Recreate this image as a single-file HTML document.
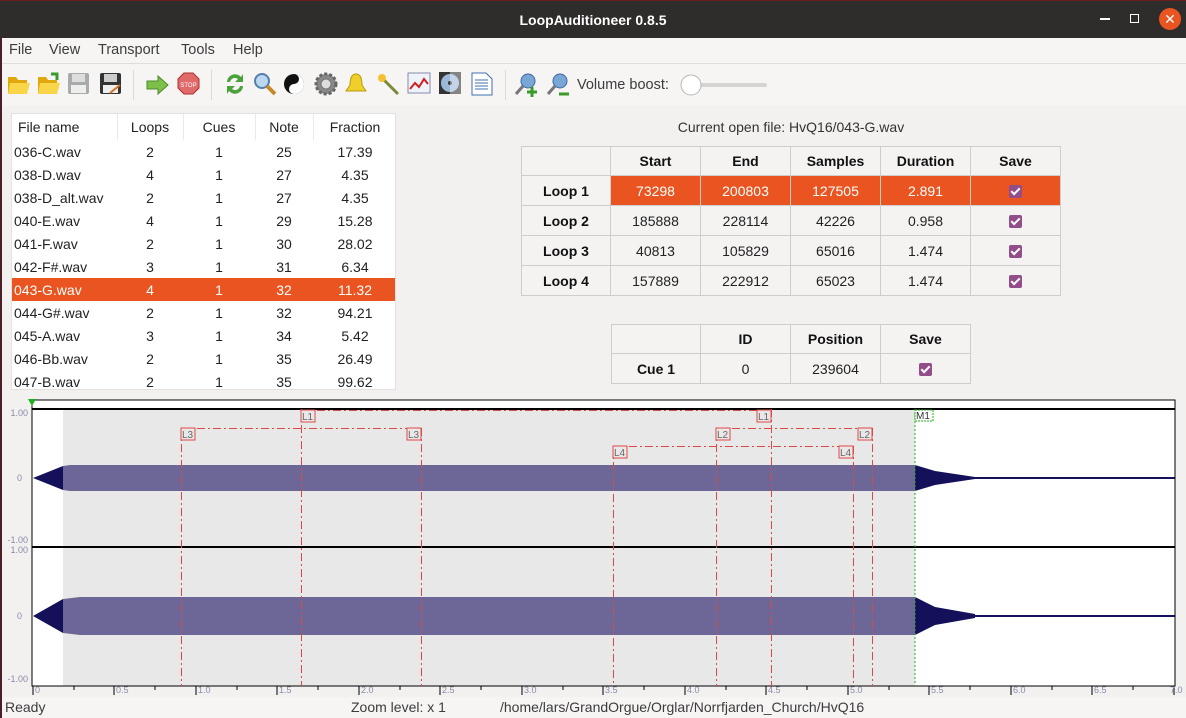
<!DOCTYPE html>
<html><head><meta charset="utf-8"><style>
*{margin:0;padding:0;box-sizing:border-box}
body{width:1186px;height:718px;overflow:hidden;background:#f2f1f0;font-family:"Liberation Sans","DejaVu Sans",sans-serif;font-size:14px;color:#3c3c3c;position:relative}
.abs{position:absolute}
#title{left:0;top:0;width:1186px;height:38px;background:#2f2d2b;color:#fff;font-weight:bold;font-size:14px;text-align:center;line-height:38px;border-top:1px solid #6b1c1c}
#menu{left:0;top:38px;width:1186px;height:26px;background:#f6f5f4;border-bottom:1px solid #e0dedc}
#menu span{position:absolute;top:4px;font-size:14.5px;color:#3c3c3c}
#tb{left:0;top:64px;width:1186px;height:42px;background:#f6f5f4}
.sep{position:absolute;top:70px;width:1px;height:30px;background:#dcdad7}
table{border-collapse:collapse}
#files{left:11px;top:113px;width:385px;height:277px;background:#fff;border:1px solid #e4e2e0;overflow:hidden}
#files table{width:385px;font-size:14px;color:#222;table-layout:fixed}
#files td{height:23px;text-align:center;padding:0;white-space:nowrap}
#files td:first-child{text-align:left;padding-left:2px}
#files tr.h td{height:26px;border-right:1px solid #eceae8}
#files tr.h td:first-child{padding-left:6px}
#files tr.sel td{background:#e95420;color:#fff}
.grid td{border:1px solid #cfcdcb;text-align:center;font-size:14px;color:#222;background:#f4f3f2;padding:0}
.grid tr:first-child td,.grid td:first-child{font-weight:bold;color:#111}
.grid td.o{background:#e95420;color:#fff}
.cb{display:inline-block;width:13px;height:13px;background:#924d8b;border-radius:2px;position:relative;vertical-align:middle}
.cb:after{content:"";position:absolute;left:4px;top:1px;width:3px;height:7px;border:solid #fff;border-width:0 2px 2px 0;transform:rotate(45deg)}
#status{left:0;top:697px;width:1186px;height:21px;background:#f6f5f4;font-size:14px}
#status span{position:absolute;top:2px}
</style></head><body>
<div id="title" class="abs">LoopAuditioneer 0.8.5</div>
<div class="abs" style="left:1100px;top:18px;width:10px;height:1.5px;background:#fff"></div>
<div class="abs" style="left:1130px;top:14px;width:9px;height:9px;border:1.5px solid #fff"></div>
<div class="abs" style="left:1159px;top:8px;width:22px;height:22px;border-radius:50%;background:#e95420;color:#fff;text-align:center;line-height:22px;font-size:14px">✕</div>
<div id="menu" class="abs"><span style="left:9px">File</span><span style="left:49px">View</span><span style="left:98px">Transport</span><span style="left:181px">Tools</span><span style="left:233px">Help</span></div>
<div id="tb" class="abs">
<svg width="780" height="42" style="position:absolute;left:0;top:0">
<g transform="translate(7,8)"><path d="M1 5h8l2 3h9v14H1z" fill="#e0a80c"/><path d="M3 11h20l-3 11H1z" fill="#f9d54a"/></g>
<g transform="translate(37,8)"><path d="M1 5h8l2 3h9v14H1z" fill="#e0a80c"/><path d="M3 11h20l-3 11H1z" fill="#f9d54a"/><path d="M14 2l6 0 0 6" stroke="#3a9a2a" stroke-width="3" fill="none"/></g>
<g transform="translate(68,9)"><rect width="21" height="21" rx="2" fill="#aaa"/><rect x="4" y="1" width="13" height="8" fill="#ddd"/><rect x="3" y="12" width="15" height="8" fill="#eee"/></g>
<g transform="translate(100,9)"><rect width="21" height="21" rx="2" fill="#333"/><rect x="4" y="1" width="13" height="8" fill="#ccc"/><rect x="3" y="12" width="15" height="8" fill="#eee"/><path d="M10 20l10-8" stroke="#d07020" stroke-width="2"/></g>
<g transform="translate(146,10)"><path d="M1 7h11V2l10 9-10 9v-5H1z" fill="#7cc04a" stroke="#4d8a2a"/></g>
<g transform="translate(177,8)"><polygon points="7,1 16,1 22,7 22,16 16,22 7,22 1,16 1,7" fill="#e06a6a" stroke="#b03030"/><text x="11.5" y="15" font-size="6" fill="#fff" text-anchor="middle" font-family="Liberation Sans">STOP</text></g>
<g transform="translate(223,8)"><path d="M4 10a8 8 0 0 1 14-5l2-3v8h-8l3-3a5 5 0 0 0-8 3z" fill="#4ca23a"/><path d="M20 14a8 8 0 0 1-14 5l-2 3v-8h8l-3 3a5 5 0 0 0 8-3z" fill="#4ca23a"/></g>
<g transform="translate(253,8)"><circle cx="9" cy="9" r="7" fill="#bcd7f0" stroke="#5580aa" stroke-width="2"/><path d="M14 14l8 8" stroke="#c58a2a" stroke-width="4"/></g>
<g transform="translate(283,8)"><circle cx="11" cy="12" r="10" fill="#111"/><path d="M11 2a5 5 0 0 1 0 10a5 5 0 0 0 0 10a10 10 0 0 0 0-20z" fill="#fff"/><circle cx="11" cy="7" r="1.5" fill="#111"/><circle cx="11" cy="17" r="1.5" fill="#fff"/></g>
<g transform="translate(314,8)"><circle cx="12" cy="12" r="10" fill="#888" stroke="#666" stroke-width="3" stroke-dasharray="3 2"/><circle cx="12" cy="12" r="5" fill="#ddd" stroke="#777"/></g>
<g transform="translate(345,8)"><path d="M11 2c5 0 6 6 6 11l4 6H1l4-6c0-5 1-11 6-11z" fill="#f1cf2a" stroke="#b89a10"/></g>
<g transform="translate(376,8)"><path d="M8 8l14 14" stroke="#7a8a3a" stroke-width="3"/><circle cx="6" cy="6" r="4" fill="#f6c030"/></g>
<g transform="translate(408,9)"><rect width="22" height="20" fill="#eef3fa" stroke="#88a"/><path d="M2 16l5-6 4 4 5-8 4 5" stroke="#d02020" stroke-width="2" fill="none"/></g>
<g transform="translate(439,8)"><rect width="22" height="22" fill="#333"/><circle cx="11" cy="11" r="9" fill="#9cb8d8"/><circle cx="11" cy="11" r="2" fill="#333"/><rect x="11" width="11" height="22" fill="#fff" opacity=".4"/></g>
<g transform="translate(471,8)"><path d="M1 1h14l6 6v16H1z" fill="#fff" stroke="#4070b0"/><path d="M4 8h13M4 11h13M4 14h13M4 17h13" stroke="#4070b0"/></g>
<g transform="translate(514,8)"><circle cx="14" cy="9" r="7" fill="#7aa6d6" stroke="#3a6aa0"/><path d="M9 14l-7 8" stroke="#777" stroke-width="3"/><path d="M13 20h10M18 15v10" stroke="#3a9a2a" stroke-width="3"/></g>
<g transform="translate(546,8)"><circle cx="14" cy="9" r="7" fill="#7aa6d6" stroke="#3a6aa0"/><path d="M9 14l-7 8" stroke="#777" stroke-width="3"/><path d="M13 22h10" stroke="#3a9a2a" stroke-width="3"/></g>
<text x="577" y="25" font-size="14.5" fill="#3c3c3c" font-family="Liberation Sans">Volume boost:</text>
<rect x="700" y="19" width="67" height="4" rx="2" fill="#d6d4d2"/>
<circle cx="691" cy="21" r="10" fill="#fff" stroke="#b8b6b4"/>
</svg>
</div>
<div class="sep" style="left:133px"></div><div class="sep" style="left:211px"></div><div class="sep" style="left:505px"></div>

<div id="files" class="abs"><table>
<colgroup><col style="width:105px"><col style="width:66px"><col style="width:72px"><col style="width:58px"><col style="width:84px"></colgroup>
<tr class="h"><td>File name</td><td>Loops</td><td>Cues</td><td>Note</td><td>Fraction</td></tr>
<tr><td>036-C.wav</td><td>2</td><td>1</td><td>25</td><td>17.39</td></tr>
<tr><td>038-D.wav</td><td>4</td><td>1</td><td>27</td><td>4.35</td></tr>
<tr><td>038-D_alt.wav</td><td>2</td><td>1</td><td>27</td><td>4.35</td></tr>
<tr><td>040-E.wav</td><td>4</td><td>1</td><td>29</td><td>15.28</td></tr>
<tr><td>041-F.wav</td><td>2</td><td>1</td><td>30</td><td>28.02</td></tr>
<tr><td>042-F#.wav</td><td>3</td><td>1</td><td>31</td><td>6.34</td></tr>
<tr class="sel"><td>043-G.wav</td><td>4</td><td>1</td><td>32</td><td>11.32</td></tr>
<tr><td>044-G#.wav</td><td>2</td><td>1</td><td>32</td><td>94.21</td></tr>
<tr><td>045-A.wav</td><td>3</td><td>1</td><td>34</td><td>5.42</td></tr>
<tr><td>046-Bb.wav</td><td>2</td><td>1</td><td>35</td><td>26.49</td></tr>
<tr><td>047-B.wav</td><td>2</td><td>1</td><td>35</td><td>99.62</td></tr>
</table></div>

<div class="abs" style="left:521px;top:119px;width:540px;text-align:center;font-size:14px;color:#333">Current open file: HvQ16/043-G.wav</div>
<table class="grid abs" style="left:521px;top:146px;width:540px">
<tr style="height:29px"><td style="width:89px"></td><td style="width:90px">Start</td><td style="width:90px">End</td><td style="width:90px">Samples</td><td style="width:90px">Duration</td><td>Save</td></tr>
<tr style="height:30px"><td>Loop 1</td><td class="o">73298</td><td class="o">200803</td><td class="o">127505</td><td class="o">2.891</td><td class="o"><span class="cb"></span></td></tr>
<tr style="height:30px"><td>Loop 2</td><td>185888</td><td>228114</td><td>42226</td><td>0.958</td><td><span class="cb"></span></td></tr>
<tr style="height:30px"><td>Loop 3</td><td>40813</td><td>105829</td><td>65016</td><td>1.474</td><td><span class="cb"></span></td></tr>
<tr style="height:30px"><td>Loop 4</td><td>157889</td><td>222912</td><td>65023</td><td>1.474</td><td><span class="cb"></span></td></tr>
</table>
<table class="grid abs" style="left:611px;top:324px;width:360px">
<tr style="height:29px"><td style="width:89px"></td><td style="width:90px">ID</td><td style="width:90px">Position</td><td>Save</td></tr>
<tr style="height:30px"><td>Cue 1</td><td>0</td><td>239604</td><td><span class="cb"></span></td></tr>
</table>

<svg class="abs" style="left:0;top:395px" width="1186" height="302" font-family="Liberation Sans">
<rect x="32" y="5" width="1143" height="9" fill="#fff" stroke="#000"/>
<polygon points="28,4 36,4 32,11" fill="#1bb01b"/>
<rect x="32" y="14" width="1143" height="277" fill="#fff"/>
<rect x="63" y="14" width="852" height="277" fill="#e8e8e8"/>
<polygon points="33,83 63,71 63,95" fill="#14105a"/>
<polygon points="63,71 70,70 915,70 915,96 70,96 63,95" fill="#6d6797"/>
<polygon points="915,70 935,76 975,82 975,84 935,90 915,96" fill="#14105a"/>
<rect x="975" y="82" width="200" height="2" fill="#14105a"/>
<polygon points="33,221 63,204 63,238" fill="#14105a"/>
<polygon points="63,204 80,202 915,202 915,240 80,240 63,238" fill="#6d6797"/>
<polygon points="915,202 935,212 975,219 975,223 935,230 915,240" fill="#14105a"/>
<rect x="975" y="220" width="200" height="2" fill="#14105a"/>
<line x1="32" y1="14" x2="1175" y2="14" stroke="#000" stroke-width="2"/>
<line x1="32" y1="152" x2="1175" y2="152" stroke="#000" stroke-width="2"/>
<rect x="32" y="14" width="1143" height="277" fill="none" stroke="#000"/>
<g stroke="#e04848" stroke-width="1" stroke-dasharray="8 3 2 3" fill="none">
<path d="M181.5,33V291M301.5,14V291M421.5,33V291M613.5,51V291M716.5,33V291M771.5,14V291M853.5,51V291M872.5,33V291"/>
<path d="M301,15.5H771M181,33.5H421M716,33.5H872M613,51.5H853"/>
</g>
<g font-size="10" fill="#666">
<rect x="301" y="15" width="14" height="12" fill="#e8e8e8" stroke="#e04848"/><text x="302" y="25">L1</text>
<rect x="757" y="15" width="14" height="12" fill="#e8e8e8" stroke="#e04848"/><text x="758" y="25">L1</text>
<rect x="181" y="33" width="14" height="12" fill="#e8e8e8" stroke="#e04848"/><text x="182" y="43">L3</text>
<rect x="407" y="33" width="14" height="12" fill="#e8e8e8" stroke="#e04848"/><text x="408" y="43">L3</text>
<rect x="716" y="33" width="14" height="12" fill="#e8e8e8" stroke="#e04848"/><text x="717" y="43">L2</text>
<rect x="858" y="33" width="14" height="12" fill="#e8e8e8" stroke="#e04848"/><text x="859" y="43">L2</text>
<rect x="613" y="51" width="14" height="12" fill="#e8e8e8" stroke="#e04848"/><text x="614" y="61">L4</text>
<rect x="839" y="51" width="14" height="12" fill="#e8e8e8" stroke="#e04848"/><text x="840" y="61">L4</text>
</g>
<line x1="915" y1="14" x2="915" y2="291" stroke="#1bb01b" stroke-dasharray="2 2"/>
<rect x="915" y="15" width="18" height="11" fill="#fff" stroke="#1bb01b" stroke-dasharray="2 1"/><text x="916" y="24" font-size="10" fill="#333">M1</text>
<g font-size="9" fill="#8a8aaa" text-anchor="end">
<text x="28" y="21">1.00</text><text x="22" y="86">0</text><text x="28" y="148">-1.00</text>
<text x="28" y="158">1.00</text><text x="22" y="224">0</text><text x="28" y="287">-1.00</text>
</g>
<g stroke="#000">
<path d="M33,291v9M74,291v4M114,291v9M155,291v4M196,291v9M237,291v4M277,291v9M318,291v4M359,291v9M400,291v4M440,291v9M481,291v4M522,291v9M563,291v4M603,291v9M644,291v4M685,291v9M726,291v4M766,291v9M807,291v4M848,291v9M889,291v4M929,291v9M970,291v4M1011,291v9M1052,291v4M1092,291v9M1133,291v4M1174,291v9"/>
</g>
<g font-size="9" fill="#8a8aaa">
<text x="35" y="298">0</text><text x="116" y="298">0.5</text><text x="198" y="298">1.0</text><text x="279" y="298">1.5</text><text x="361" y="298">2.0</text><text x="442" y="298">2.5</text><text x="524" y="298">3.0</text><text x="605" y="298">3.5</text><text x="687" y="298">4.0</text><text x="768" y="298">4.5</text><text x="850" y="298">5.0</text><text x="931" y="298">5.5</text><text x="1013" y="298">6.0</text><text x="1094" y="298">6.5</text><text x="1170" y="298">7.0</text>
</g>
</svg>

<div id="status" class="abs"><span style="left:5px">Ready</span><span style="left:351px">Zoom level: x 1</span><span style="left:500px">/home/lars/GrandOrgue/Orglar/Norrfjarden_Church/HvQ16</span></div>
<div class="abs" style="left:0;top:38px;width:2px;height:680px;background:#4a1f2a"></div>
</body></html>
